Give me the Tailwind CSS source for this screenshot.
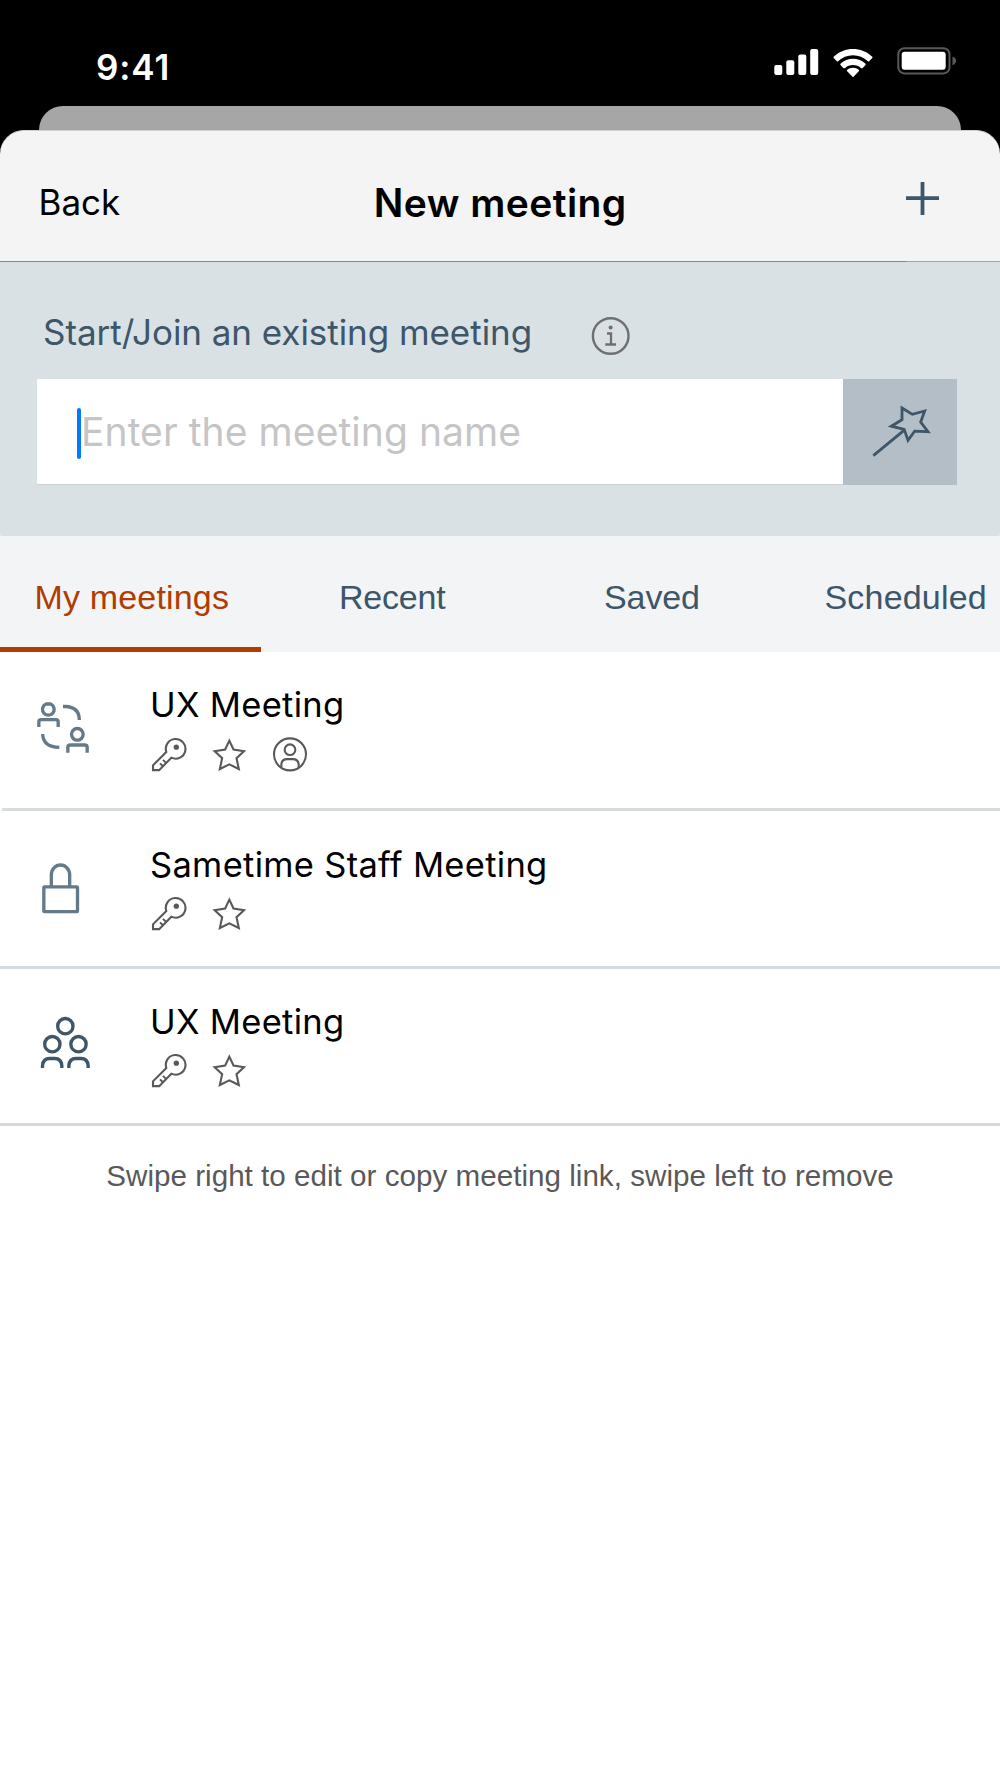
<!DOCTYPE html>
<html lang="en">
<head>
<meta charset="utf-8">
<title>New meeting</title>
<script src="https://cdn.jsdelivr.net/npm/@tailwindcss/browser@4"></script>
</head>
<body class="w-[1000px] h-[1778px] overflow-hidden bg-white font-['Inter',sans-serif] text-black">
<svg class="hidden">
  <symbol id="key" viewBox="450 196 111 111">
    <g fill="none" stroke="#595959" stroke-width="6.3">
      <path d="M499 244 L459 284 V298.500 H477.500 L514 261 A29.500 29.500 0 1 0 499 244 Z"/>
      <path d="M480 278 L488 286 M489 267.500 L498 276.500" stroke-width="6"/>
    </g>
    <circle cx="529" cy="229.500" r="8" fill="#595959"/>
  </symbol>
  <symbol id="star" viewBox="634 196 111 111">
    <path d="M689 210 L701.500 236.500 L733 241.500 L710.500 262.500 L717.500 295 L689 281 L660.500 295 L667.500 262.500 L645 241.500 L676.500 236.500 Z" fill="none" stroke="#595959" stroke-width="6.300"/>
  </symbol>
  <symbol id="user" viewBox="816 196 111 111">
    <g fill="none" stroke="#595959" stroke-width="6.300">
      <circle cx="870" cy="251" r="48"/>
      <circle cx="870" cy="237" r="16"/>
      <path d="M844 291 V283 Q844 265.500 862 265.500 H878 Q896 265.500 896 283 V291"/>
    </g>
  </symbol>
</svg>

<!-- Status bar -->
<div class="bg-black h-[130px] flex flex-col">
  <div class="h-[106px] shrink-0 flex justify-between items-start pl-[96px] pr-[43px]">
    <span class="mt-[47px] text-[35px] leading-10 font-semibold tracking-[0.9px] text-white">9:41</span>
    <div class="flex mt-[46px]">
      <svg class="w-[45px] h-[30px]" viewBox="0 0 45 30" fill="#fff"><rect x="0.300" y="19" width="8" height="10" rx="2"/><rect x="12.300" y="14.300" width="8" height="14.700" rx="2"/><rect x="24.300" y="8.500" width="8" height="20.500" rx="2"/><rect x="36.200" y="3" width="8" height="26" rx="2"/></svg>
      <svg class="w-10 h-[28px] mt-[2.500px] ml-3.5" viewBox="0.200 0.200 16.600 11.400" preserveAspectRatio="none" fill="#fff"><path d="M8.500 2.700c2.300 0 4.500.9 6.200 2.500.1.100.300.100.500 0l1.300-1.300c.1-.1.100-.3 0-.5-4.500-4.200-11.500-4.200-16 0-.1.100-.1.300 0 .5l1.300 1.300c.1.100.300.100.500 0 1.700-1.600 3.900-2.500 6.200-2.500z"/><path d="M8.500 6.700c1.300 0 2.500.5 3.400 1.300.1.100.400.100.500 0l1.300-1.300c.1-.1.100-.4 0-.5-2.900-2.700-7.500-2.700-10.400 0-.1.100-.1.400 0 .5l1.300 1.300c.1.100.400.100.500 0 .9-.8 2.100-1.300 3.400-1.300z"/><path d="M11 9.200c.1-.1.100-.4 0-.5-1.400-1.200-3.600-1.200-5 0-.1.100-.1.400 0 .5l2.300 2.300c.1.100.300.100.400 0z"/></svg>
      <svg class="w-[60px] h-[30px] ml-6" viewBox="0 0 60 30"><rect x="1.300" y="2.200" width="51.200" height="25.200" rx="6" fill="none" stroke="#595959" stroke-width="2"/><rect x="4.700" y="5.700" width="44" height="18" rx="3" fill="#fff"/><path d="M55.500 10.500 Q59 11.500 59 14.700 Q59 18 55.500 19.300 Z" fill="#595959"/></svg>
    </div>
  </div>
  <div class="mx-[39px] h-6 rounded-t-[24px] bg-[#a6a6a6]"></div>
</div>

<!-- Sheet header -->
<div class="bg-black">
  <header class="h-[131px] rounded-t-[24px] bg-[#f4f4f4] border-t border-[#d2d2d2] pl-[38.500px] pr-[60px] flex justify-between items-start">
    <span class="w-[120px] mt-[51px] text-[35px] leading-10">Back</span>
    <h1 class="mt-[52px] ml-[38px] text-[39px] leading-10 font-semibold tracking-[0.43px]">New meeting</h1>
    <div class="w-[136px] mt-[50px] flex justify-end">
      <svg class="w-[35px] h-[35px]" viewBox="0 0 35 35"><path d="M17.500 1 V34 M1 17.200 H34" stroke="#3d566a" stroke-width="3.800"/></svg>
    </div>
  </header>
</div>
<div class="h-px flex"><div class="w-[906px] bg-[#7f8789]"></div><div class="flex-1 bg-[#9ea5a7]"></div></div>

<!-- Start / join -->
<div class="bg-[#f2f4f6]">
<section class="h-[274px] bg-[#d9e1e4] rounded-b-[2px] pt-[50px] pl-[37px]">
  <div class="flex h-[67px] pl-[6px]">
    <span class="w-[548px] text-[35px] leading-10 tracking-[-0.05px] text-[#3d566a]">Start/Join an existing meeting</span>
    <svg class="w-[40px] h-[40px] mt-[4px]" viewBox="0 0 40 40" fill="none" stroke="#6f6f6f"><circle cx="19.700" cy="20" r="17.800" stroke-width="2.400"/><path d="M16 17.500 H20 V28.500 M14.300 28.500 H25" stroke-width="2.300"/><circle cx="19.600" cy="11.500" r="2" fill="#6f6f6f" stroke="none"/></svg>
  </div>
  <div class="flex h-[107px]">
    <div class="w-[806px] h-[106px] bg-white border-b border-[#cdd0d2] flex items-start pl-[40px]">
      <div class="w-[4px] h-[51px] mt-[29px] rounded-full bg-[#007aff]"></div>
      <span class="mt-[33px] text-[39px] leading-10 tracking-[0.08px] text-[#c5c5c7]">Enter the meeting name</span>
    </div>
    <svg class="w-[114px] h-[106px] bg-[#b3bec7]" viewBox="69 57 342 318" fill="none" stroke="#3d566a" stroke-width="8.5"><path d="M246 144 L277 163 L314 153 L302 186 L324 215 L284 213.500 L264 241 L252.500 208 L214 198.500 L246 179 Z"/><path d="M160 287 L251 212"/></svg>
  </div>
</section>
</div>

<!-- Tabs -->
<nav class="h-[116px] bg-[#f2f4f6] flex font-['Liberation_Sans',sans-serif] text-[34px] leading-10 text-[#3d566a]">
  <div class="w-[261px] h-[116px] border-b-[5px] border-[#b13c00] text-[#b13c00] pl-[34.500px] pt-[41px] tracking-[0.17px]">My meetings</div>
  <div class="pt-[41px] w-[265px] pl-[78px] tracking-[-0.2px]">Recent</div>
  <div class="pt-[41px] w-[220px] pl-[78px] tracking-[-0.1px]">Saved</div>
  <div class="pt-[41px] pl-[78.500px] tracking-[0.19px]">Scheduled</div>
</nav>

<!-- Meetings -->
<main class="text-[34.500px] leading-10 tracking-[0.3px]">
  <div class="h-[156px] flex items-start pl-9">
    <svg class="w-[54px] h-[52px] mt-[50px]" viewBox="108 96 162 156" fill="none" stroke="#647a8b" stroke-width="10"><path d="M138 102 A17.500 17.500 0 1 0 152 102 Z" stroke-linejoin="round"/><path d="M116.500 171 V155 Q116.500 149 124 149 H168 Q174.500 149 174.500 155 V171"/><path d="M189 109.500 H196 Q238 111 238 150"/><path d="M128 192 Q129 231 178 232"/><circle cx="232" cy="193" r="17.500"/><path d="M203.500 248 V232 Q203.500 225 211 225 H254 Q261.500 225 261.500 232 V248"/></svg>
    <div class="ml-[60px] mt-[33px]">
      <div>UX Meeting</div>
      <div class="flex gap-6 mt-[10.500px]"><svg class="size-[37px]"><use href="#key"/></svg><svg class="size-[37px]"><use href="#star"/></svg><svg class="size-[37px]"><use href="#user"/></svg></div>
    </div>
  </div>
  <div class="h-[3px] ml-[2px] bg-[#d5dbdf]"></div>
  <div class="h-[155px] flex items-start pl-9">
    <svg class="w-[54px] h-[52px] mt-[51px]" viewBox="108 126 162 156" fill="none" stroke="#647a8b" stroke-width="10"><path d="M154 199 V165 A27.500 30 0 0 1 209 165 V199"/><rect x="131.500" y="200.500" width="101" height="74.500" rx="2"/></svg>
    <div class="ml-[60px] mt-[34px]">
      <div>Sametime Staff Meeting</div>
      <div class="flex gap-6 mt-[10px]"><svg class="size-[37px]"><use href="#key"/></svg><svg class="size-[37px]"><use href="#star"/></svg></div>
    </div>
  </div>
  <div class="h-[3px] bg-[#d5dbdf]"></div>
  <div class="h-[154px] flex items-start pl-9">
    <svg class="w-[54px] h-[53px] mt-[47px]" viewBox="108 108 162 159" fill="none" stroke="#3d566a" stroke-width="10"><circle cx="196" cy="138.500" r="23"/><circle cx="157" cy="192.500" r="23"/><circle cx="235.500" cy="192.500" r="23"/><path d="M127.500 264 V257 Q129 235.500 149 235.500 H164 Q184 235.500 185.500 257 V264"/><path d="M206.500 264 V257 Q208 235.500 228 235.500 H243 Q263 235.500 264.500 257 V264"/></svg>
    <div class="ml-[60px] mt-[33px]">
      <div>UX Meeting</div>
      <div class="flex gap-6 mt-[10px]"><svg class="size-[37px]"><use href="#key"/></svg><svg class="size-[37px]"><use href="#star"/></svg></div>
    </div>
  </div>
  <div class="h-[3px] bg-[#d5d9de]"></div>
  <p class="mt-[30px] text-center font-['Liberation_Sans',sans-serif] text-[29.600px] leading-10 tracking-[0.02px] text-[#595959] whitespace-nowrap">Swipe right to edit or copy meeting link, swipe left to remove</p>
</main>
</body>
</html>
